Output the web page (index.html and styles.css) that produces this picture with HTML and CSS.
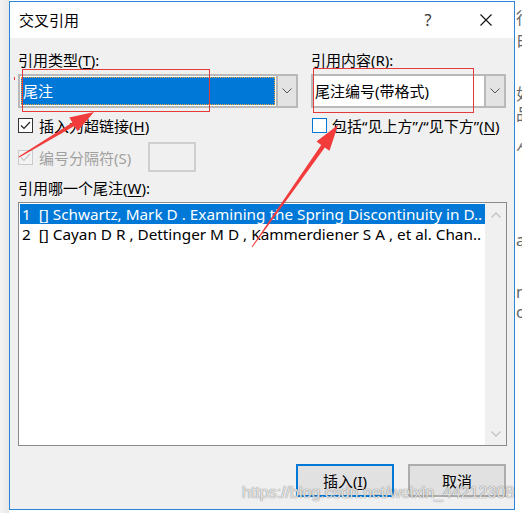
FILE: index.html
```html
<!DOCTYPE html>
<html lang="zh-CN">
<head>
<meta charset="utf-8">
<title>交叉引用</title>
<link rel="stylesheet" href="styles.css">
</head>
<body>
<div class="screen">
  <div class="shade"></div>
  <div class="dialog">
    <div class="titlebar">
      <span class="title">交叉引用</span>
      <span class="help">?</span>
      <span class="close"><svg width="12" height="12" viewBox="0 0 12 12"><path d="M0.5 0.5 L11.5 11.5 M11.5 0.5 L0.5 11.5" stroke="#111" stroke-width="1.1" fill="none"/></svg></span>
    </div>
    <div class="content">
      <div class="top-grid">
        <div class="label">引用类型(<u>T</u>):</div>
        <div class="label">引用内容(<u>R</u>):</div>
        <div class="combo">
          <div class="combo-field"><span class="sel">尾注</span></div>
          <div class="combo-btn"><svg width="10" height="6" viewBox="0 0 10 6"><polyline points="0.5,0.5 5,5 9.5,0.5" stroke="#555" stroke-width="1" fill="none"/></svg></div>
        </div>
        <div class="combo">
          <div class="combo-field"><span class="val">尾注编号(带格式)</span></div>
          <div class="combo-btn"><svg width="10" height="6" viewBox="0 0 10 6"><polyline points="0.5,0.5 5,5 9.5,0.5" stroke="#555" stroke-width="1" fill="none"/></svg></div>
        </div>
        <div class="check-row">
          <span class="cb"><svg width="13" height="13" viewBox="0 0 13 13"><polyline points="2,6.5 5,9.5 11,3" stroke="#222" stroke-width="1.2" fill="none"/></svg></span>
          <span>插入为超链接(<u>H</u>)</span>
        </div>
        <div class="check-row shift">
          <span class="cb hover"></span>
          <span>包括“见上方”/“见下方”(<u>N</u>)</span>
        </div>
      </div>
      <div class="sep-row">
        <span class="cb disabled"><svg width="13" height="13" viewBox="0 0 13 13"><polyline points="2,6.5 5,9.5 11,3" stroke="#c6c6c6" stroke-width="1.2" fill="none"/></svg></span>
        <span class="sep-label">编号分隔符(S)</span>
        <span class="sep-box"></span>
      </div>
      <div class="label list-label">引用哪一个尾注(<u>W</u>):</div>
      <div class="list">
        <div class="items">
          <div class="item selected">1&nbsp;&nbsp;[] Schwartz, Mark D . Examining the Spring Discontinuity in D..</div>
          <div class="item">2&nbsp;&nbsp;[] Cayan D R , Dettinger M D , Kammerdiener S A , et al. Chan..</div>
        </div>
        <div class="scrollbar">
          <svg width="10" height="6" viewBox="0 0 10 6"><polyline points="0.5,5.5 5,1 9.5,5.5" stroke="#c4c4c4" stroke-width="1.4" fill="none"/></svg>
          <svg width="10" height="6" viewBox="0 0 10 6"><polyline points="0.5,0.5 5,5 9.5,0.5" stroke="#c4c4c4" stroke-width="1.4" fill="none"/></svg>
        </div>
      </div>
      <div class="buttons">
        <div class="btn default">插入(<u>I</u>)</div>
        <div class="btn">取消</div>
      </div>
    </div>
  </div>
  <div class="docstrip">
    <span class="ch c1">行</span>
    <span class="ch c2">白</span>
    <span class="ch c3">如</span>
    <span class="ch c4">品</span>
    <span class="ch c5">乍</span>
    <span class="ch c6">a</span>
    <span class="ch c7">n</span>
    <span class="ch c8">c</span>
  </div>
  <svg class="annot" width="522" height="513" viewBox="0 0 522 513">
    <rect x="22.5" y="69.5" width="187" height="42" fill="none" stroke="#e53a3c" stroke-width="1"/>
    <rect x="313.5" y="68.5" width="160" height="44" fill="none" stroke="#e53a3c" stroke-width="1"/>
    <line x1="14.5" y1="77" x2="14.5" y2="80" stroke="#e53a3c" stroke-width="1"/>
    <polygon points="18.7,156.6 72.4,122.6 69.3,117.4 94,112 77.5,131.2 74.4,126.0 19.3,157.4" fill="#f23b3b"/>
    <polygon points="251.6,246.7 321.2,144.9 316.5,141.6 338,125 329.5,150.8 324.8,147.5 252.4,247.3" fill="#f23b3b"/>
  </svg>
  <div class="watermark">https://blog.csdn.net/weixin_44212308</div>
</div>
</body>
</html>
```

FILE: styles.css
```css
* { box-sizing: border-box; }
html, body { margin: 0; padding: 0; }
body {
  width: 522px;
  height: 513px;
  overflow: hidden;
  background: #fff;
  font-family: "Noto Sans", "Noto Sans CJK SC", sans-serif;
  font-size: 15px;
  color: #000;
}
u { text-decoration: underline; text-underline-offset: 2px; }

.screen {
  position: relative;
  width: 522px;
  height: 513px;
  display: flex;
  align-items: flex-start;
  background: #fff;
}
.shade {
  width: 9px;
  height: 513px;
  background: linear-gradient(to right, #f3f3f3, #e7e7e7);
}
.dialog {
  width: 506px;
  height: 509px;
  margin-top: 1px;
  border: 1px solid #2b86d8;
  background: #f0f0f0;
  display: flex;
  flex-direction: column;
  flex-shrink: 0;
}
.titlebar {
  height: 36px;
  background: #fff;
  display: flex;
  align-items: center;
  padding-left: 9px;
}
.title { flex: 1; line-height: 20px; font-size: 15px; }
.help {
  width: 12px;
  text-align: center;
  font-size: 16px;
  line-height: 20px;
  color: #333;
  margin-right: 46px;
}
.close {
  width: 12px;
  height: 12px;
  margin-right: 22px;
  display: flex;
}

.content {
  flex: 1;
  padding: 12px 8px 12px 8px;
  display: flex;
  flex-direction: column;
}
.top-grid {
  display: grid;
  grid-template-columns: 280px 195px;
  column-gap: 13px;
}
.label { height: 20px; line-height: 20px; white-space: nowrap; }
.combo {
  margin-top: 4px;
  height: 34px;
  border: 2px solid #b9b9b9;
  background: #fff;
  display: flex;
}
.combo-field {
  flex: 1;
  padding: 1px;
  display: flex;
}
.sel {
  flex: 1;
  background: #0078d7;
  color: #fff;
  border: 1px dotted #f0a23a;
  padding-left: 1px;
  line-height: 26px;
}
.val { padding-left: 1px; line-height: 28px; }
.combo-btn {
  width: 20px;
  background: #e3e3e3;
  border-left: 2px solid #b9b9b9;
  display: flex;
  align-items: center;
  justify-content: center;
}
.check-row {
  margin-top: 7px;
  height: 20px;
  display: flex;
  align-items: center;
  gap: 6px;
  white-space: nowrap;
}
.check-row.shift { margin-left: 1px; gap: 5px; }
.cb {
  width: 15px;
  height: 15px;
  border: 1px solid #333;
  background: #fff;
  display: flex;
  align-items: center;
  justify-content: center;
  flex-shrink: 0;
}
.cb.hover { border-color: #0078d7; }
.cb.disabled { border-color: #cacaca; background: #f3f3f3; }

.sep-row {
  margin-top: 7px;
  height: 30px;
  display: flex;
  align-items: center;
}
.sep-label {
  width: 115px;
  padding-left: 6px;
  color: #a0a0a0;
  white-space: nowrap;
}
.sep-box {
  width: 48px;
  height: 30px;
  border: 2px solid #cfcfcf;
  background: #f0f0f0;
}
.list-label { margin-top: 6px; }
.list {
  margin-top: 4px;
  width: 489px;
  height: 244px;
  border: 1px solid #8a8a8a;
  display: flex;
}
.items {
  flex: 1;
  background: #fff;
  padding: 1px 0 0 1px;
  overflow: hidden;
}
.item {
  height: 20px;
  line-height: 20px;
  padding-left: 2px;
  font-size: 15.3px;
  white-space: nowrap;
  overflow: hidden;
}
.item.selected { background: #0078d7; color: #fff; }
.scrollbar {
  width: 21px;
  background: #f0f0f0;
  display: flex;
  flex-direction: column;
  justify-content: space-between;
  align-items: center;
  padding: 9px 0 8px 1px;
}
.buttons {
  margin-top: 18px;
  display: flex;
  justify-content: flex-end;
  gap: 14px;
}
.btn {
  width: 98px;
  height: 33px;
  background: #e1e1e1;
  border: 2px solid #adadad;
  display: flex;
  align-items: center;
  justify-content: center;
  font-size: 15px;
}
.btn.default { border-color: #0078d7; }

.docstrip {
  width: 7px;
  height: 513px;
  overflow: hidden;
  display: flex;
  flex-direction: column;
  flex-shrink: 0;
}
.ch {
  display: block;
  width: 20px;
  margin-left: 1px;
  font-size: 16px;
  line-height: 16px;
  color: #666;
}
.c1 { margin-top: 10px; }
.c2 { margin-top: 6px; }
.c3 { margin-top: 38px; }
.c4 { margin-top: 4px; }
.c5 { margin-top: 21px; }
.c6 { margin-top: 73px; }
.c7 { margin-top: 36px; }
.c8 { margin-top: 4px; }

.annot {
  position: absolute;
  left: 0;
  top: 0;
  pointer-events: none;
}
.watermark {
  position: absolute;
  left: 242px;
  top: 484px;
  font-family: "Liberation Sans", Arial, sans-serif;
  font-size: 16px;
  line-height: 18px;
  color: rgba(255, 255, 255, 0.8);
  text-shadow: 0 0 1px rgba(90, 90, 90, 0.7), 0 0 1px rgba(90, 90, 90, 0.5);
  white-space: nowrap;
  pointer-events: none;
}
```
